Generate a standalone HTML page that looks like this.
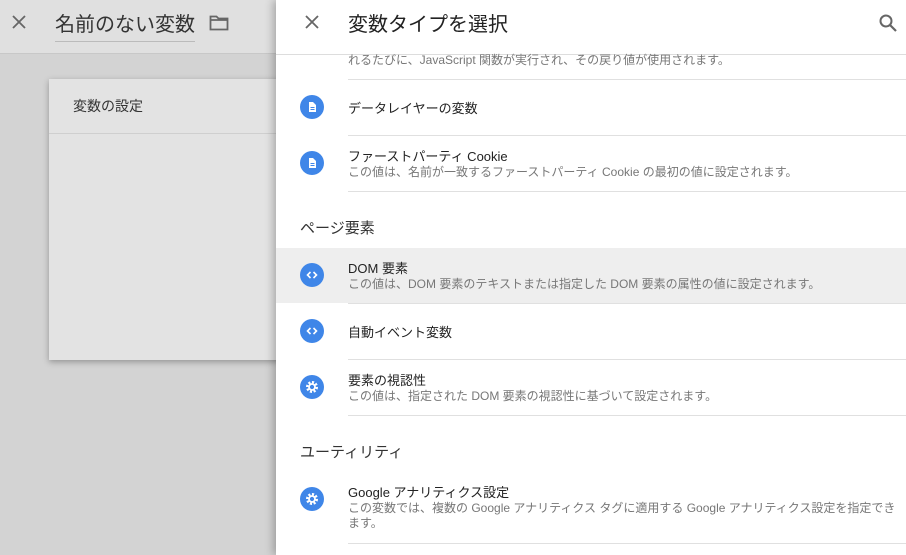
<!DOCTYPE html>
<html><head><meta charset="utf-8"><style>
*{margin:0;padding:0;box-sizing:border-box}
body{width:906px;height:555px;overflow:hidden;position:relative;background:#d3d3d3;font-family:"Liberation Sans","Noto Sans CJK JP",sans-serif}
.lh{position:absolute;left:0;top:0;width:276px;height:54px;background:#e0e0e0;border-bottom:1px solid #c8c8c8}
.card{position:absolute;left:49px;top:79px;width:240px;height:281px;background:#e3e3e3;box-shadow:0 2px 6px rgba(0,0,0,.3)}
.card .t{height:55px;border-bottom:1px solid #cfcfcf;padding:17px 0 0 24px;font-size:14px;color:#333}
.panel{position:absolute;left:276px;top:0;width:630px;height:555px;background:#fff;box-shadow:-3px 0 8px rgba(0,0,0,.25)}
.hd{height:55px;border-bottom:1px solid #ddd;position:relative}
.hd .ti{position:absolute;left:72px;top:8px;font-size:20px;color:#222}
.a{position:absolute}
.sep{position:absolute;left:72px;right:0;height:1px;background:#e0e0e0}
.ic{position:absolute;left:24px;width:24px;height:24px;border-radius:50%;background:#3f86e8}
.tt{position:absolute;left:72px;font-size:13px;color:#222}
.ds{position:absolute;left:72px;font-size:12px;color:#777;line-height:15px;width:558px}
.sh{position:absolute;left:24px;font-size:15px;color:#333}
</style></head><body>
<div class="lh">
<svg class="a" style="left:11px;top:14px" width="16" height="16" viewBox="0 0 16 16"><path d="M2 2L14 14M14 2L2 14" stroke="#666" stroke-width="1.8"/></svg>
<div class="a" style="left:55px;top:8px;font-size:20px;color:#333;border-bottom:1px solid #bbb;padding-bottom:4px;width:140px">名前のない変数</div>
<svg class="a" style="left:209px;top:15px" width="20" height="16" viewBox="0 0 20 16"><path d="M1.5 1.5h6l2 2h9v11h-17z M1.5 5h17" fill="none" stroke="#666" stroke-width="1.8"/></svg>
</div>
<div class="card"><div class="t">変数の設定</div></div>
<div class="panel">
<div class="hd">
<svg class="a" style="left:28px;top:14px" width="16" height="16" viewBox="0 0 16 16"><path d="M2 2L14 14M14 2L2 14" stroke="#666" stroke-width="1.8"/></svg>
<div class="ti">変数タイプを選択</div>
<svg class="a" style="left:602px;top:13px" width="20" height="20" viewBox="0 0 20 20"><circle cx="8" cy="8" r="5.5" fill="none" stroke="#666" stroke-width="2"/><path d="M12 12l6 6" stroke="#666" stroke-width="2.2"/></svg>
</div>
<div class="ds" style="top:53px">れるたびに、JavaScript 関数が実行され、その戻り値が使用されます。</div>
<div class="sep" style="top:79px"></div>
<div class="ic" style="top:95px"><svg width="24" height="24"><path d="M9 7h4l3 3v7H9z" fill="#fff"/><path d="M10.5 12.5h4M10.5 14.5h4" stroke="#3f86e8"/></svg></div>
<div class="tt" style="top:98px">データレイヤーの変数</div>
<div class="sep" style="top:135px"></div>
<div class="ic" style="top:151px"><svg width="24" height="24"><path d="M9 7h4l3 3v7H9z" fill="#fff"/><path d="M10.5 12.5h4M10.5 14.5h4" stroke="#3f86e8"/></svg></div>
<div class="tt" style="top:146px">ファーストパーティ Cookie</div>
<div class="ds" style="top:165px">この値は、名前が一致するファーストパーティ Cookie の最初の値に設定されます。</div>
<div class="sep" style="top:191px"></div>
<div class="sh" style="top:217px">ページ要素</div>
<div class="a" style="left:0;top:248px;width:630px;height:55px;background:#eee"></div>
<div class="ic" style="top:263px"><svg width="24" height="24"><path d="M10.5 9l-3 3 3 3M13.5 9l3 3-3 3" fill="none" stroke="#fff" stroke-width="1.6"/></svg></div>
<div class="tt" style="top:258px">DOM 要素</div>
<div class="ds" style="top:277px">この値は、DOM 要素のテキストまたは指定した DOM 要素の属性の値に設定されます。</div>
<div class="sep" style="top:303px"></div>
<div class="ic" style="top:319px"><svg width="24" height="24"><path d="M10.5 9l-3 3 3 3M13.5 9l3 3-3 3" fill="none" stroke="#fff" stroke-width="1.6"/></svg></div>
<div class="tt" style="top:322px">自動イベント変数</div>
<div class="sep" style="top:359px"></div>
<div class="ic" style="top:375px"><svg width="24" height="24"><circle cx="12" cy="12" r="4.5" fill="none" stroke="#fff" stroke-width="3" stroke-dasharray="2 1.5"/><circle cx="12" cy="12" r="3" fill="none" stroke="#fff" stroke-width="1.8"/></svg></div>
<div class="tt" style="top:370px">要素の視認性</div>
<div class="ds" style="top:389px">この値は、指定された DOM 要素の視認性に基づいて設定されます。</div>
<div class="sep" style="top:415px"></div>
<div class="sh" style="top:441px">ユーティリティ</div>
<div class="ic" style="top:487px"><svg width="24" height="24"><circle cx="12" cy="12" r="4.5" fill="none" stroke="#fff" stroke-width="3" stroke-dasharray="2 1.5"/><circle cx="12" cy="12" r="3" fill="none" stroke="#fff" stroke-width="1.8"/></svg></div>
<div class="tt" style="top:482px">Google アナリティクス設定</div>
<div class="ds" style="top:501px">この変数では、複数の Google アナリティクス タグに適用する Google アナリティクス設定を指定できます。</div>
<div class="sep" style="top:543px"></div>
</div>
</body></html>
